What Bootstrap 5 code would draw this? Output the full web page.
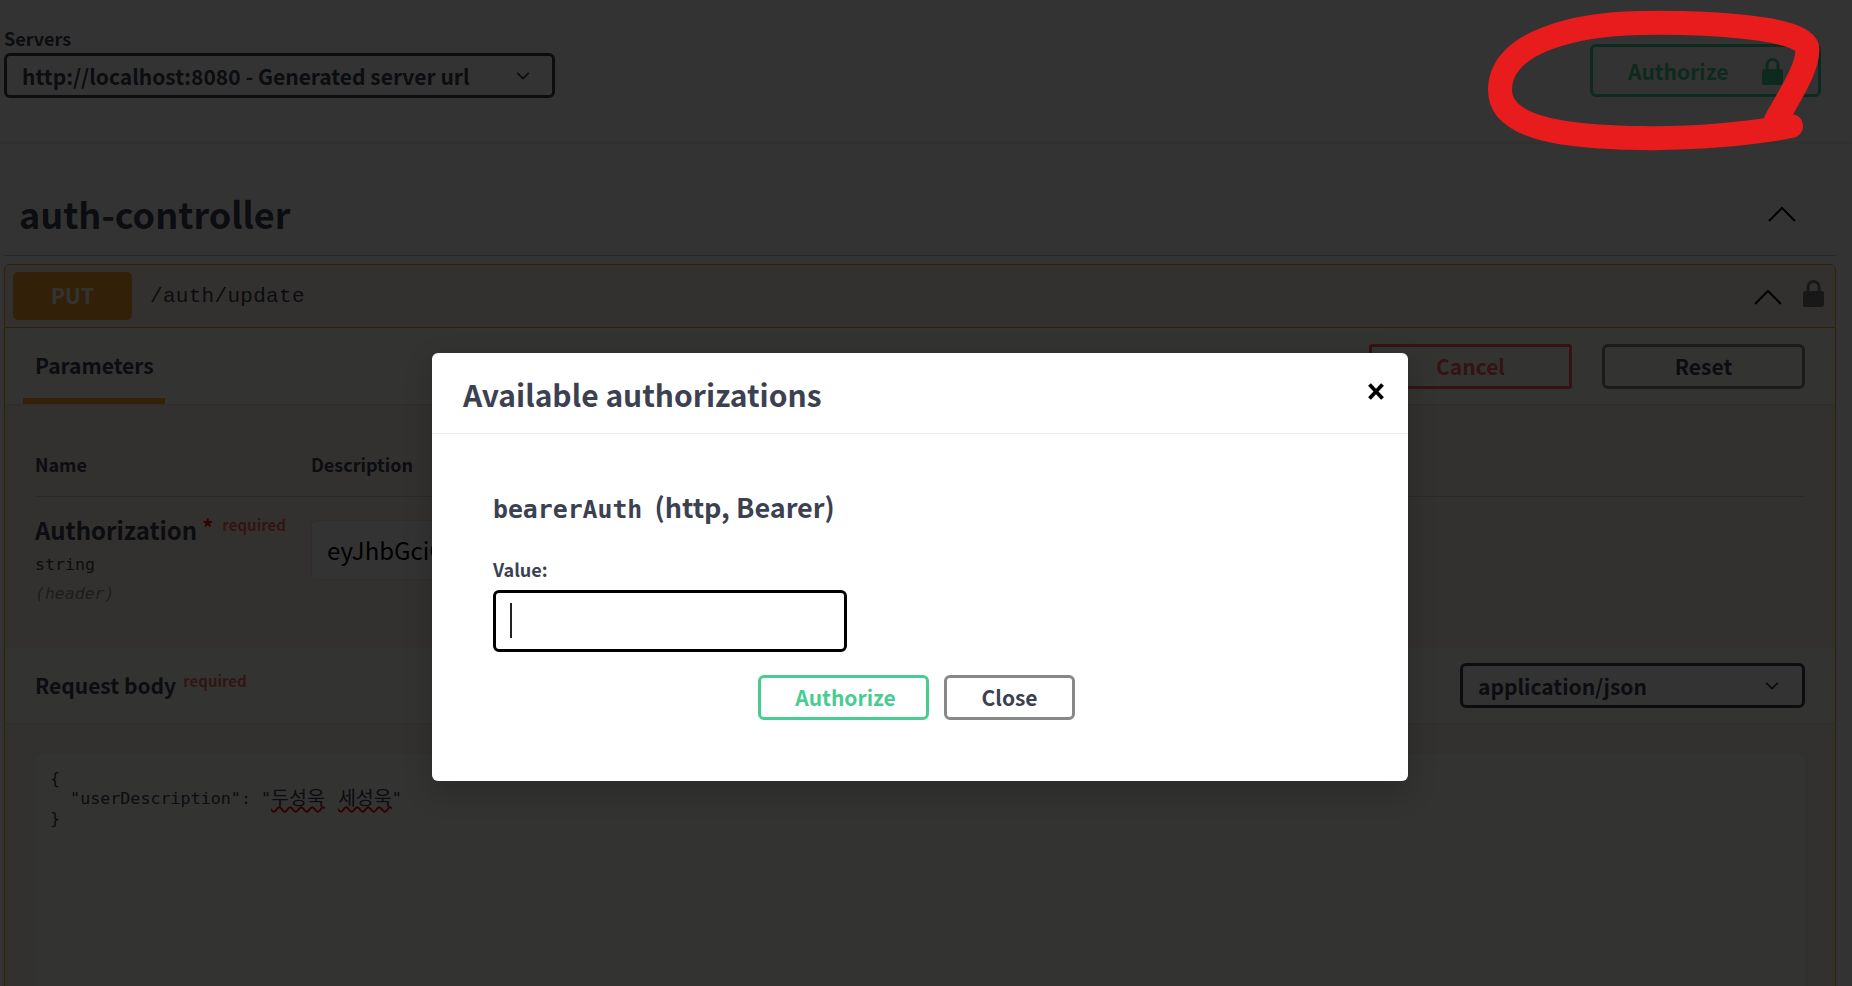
<!doctype html>
<html lang="en">
<head>
<meta charset="utf-8">
<title>Swagger UI</title>
<link rel="stylesheet" href="https://cdn.jsdelivr.net/npm/bootstrap@5.3.0/dist/css/bootstrap.min.css">
<style>
:root{--ui:"Noto Sans CJK KR","Noto Sans",sans-serif;--mono:"Liberation Mono","Noto Sans CJK KR",monospace;--ink:#3b4151}
html,body{height:986px;overflow:hidden}
body{background:#fff;font-family:var(--ui);color:var(--ink)}
.stage{position:relative;height:986px;overflow:hidden}
.scheme{height:143px;padding:24px 31px 0 4px;border-bottom:1px solid #f0f0f0;box-shadow:0 1px 2px rgba(0,0,0,.1)}
.scheme-label{font-size:18px;font-weight:600;line-height:28px;margin-bottom:1px}
.sel{width:auto;height:45px;border:3px solid #41444e;border-radius:6px;font-weight:700;font-size:21px;line-height:30px;color:var(--ink);padding:0 0 0 15px;background-position:right 24px center;background-size:18px 14px;box-shadow:none;display:flex;align-items:center;font-family:var(--ui)}
.sel-server{width:551px;background-position:right 20px center}
.sel-media{width:345px;background-position:right 21px center}
.btn-auth{width:231px;height:53px;margin-top:20px;border:3px solid #49cc90;border-radius:6px;color:#49cc90;font-weight:700;font-size:21px;padding:2px 35px 0 35px;background:transparent}
.tag-row{height:113px;margin:0 16px 0 4px;padding:30px 40px 0 15px;border-bottom:1px solid rgba(59,65,81,.3)}
.tag-title{font-size:36px;font-weight:700;margin:0;color:var(--ink);line-height:1.2}
.op{margin:8px 16px 0 4px;border:1.5px solid #fca130;border-radius:6px;background:rgba(252,161,48,.1);height:760px}
.op-head{height:63px;padding:0 11px 0 8px;border-bottom:1.5px solid #fca130}
.method{width:119px;height:48px;background:#fca130;color:#fff;font-weight:700;font-size:21px;border-radius:5px}
.path{font-family:var(--mono);font-size:21px;letter-spacing:.3px;margin-left:18px;padding-top:2px;color:var(--ink)}
.chev-op{margin-right:21px;margin-top:1px}
.lock-op{margin-top:-6px}
.tabs-row{height:76px;background:rgba(255,255,255,.8);padding:0 30px 0 18px;box-shadow:0 1px 2px rgba(0,0,0,.1)}
.tab-cur{width:142px;height:76px;padding:21px 0 0 12px;font-size:21px;font-weight:700;line-height:32px;border-bottom:6px solid #fca130;color:var(--ink)}
.action-btns{gap:30px}
.btn-line{height:45px;border:3px solid #888;border-radius:6px;font-size:21px;font-weight:700;color:var(--ink);background:transparent;padding:0;width:203px}
.btn-cancel{border-color:#ff6060;color:#ff6060;border-radius:3px}
.params{height:244px;padding:0 30px 0 30px}
.param-head{height:93px;border-bottom:1.5px solid rgba(59,65,81,.2);font-weight:700;font-size:18px;color:var(--ink);padding-top:47px;line-height:26px}
.col-name{width:276px;flex:none}
.name-main{font-size:24px;font-weight:700;line-height:32px;color:var(--ink)}
.req-star{color:red;font-size:22px;font-weight:700;position:relative;top:-4px;margin-left:5px}
.req-word{color:rgba(255,0,0,.6);font-size:15px;font-weight:700;position:relative;top:-9px;margin-left:9px}
.param-row{padding-top:17px}
.type-line{font-family:"DejaVu Sans Mono",monospace;font-size:16.6px;font-weight:400;line-height:24px;margin-top:3px}
.in-line{font-family:"DejaVu Sans Mono",monospace;font-size:16.5px;font-style:italic;color:rgba(59,65,81,.6);line-height:24px;margin-top:5px}
.val-box{width:512px;height:60px;margin-top:6px;background:#fff;border:1.5px solid #e6e6e6;border-radius:6px;padding:0 15px;font-size:24px;line-height:58px;color:#000;white-space:nowrap;overflow:hidden}
.band{height:75px;background:rgba(255,255,255,.8);padding:0 30px 0 30px;box-shadow:0 1px 2px rgba(0,0,0,.1)}
.band-title{font-size:21px;font-weight:700;color:var(--ink)}
.band-req{font-size:15px;font-weight:700;color:rgba(255,0,0,.6);position:relative;top:-7px;margin-left:7px}
.code-wrap{padding:31px 30px 0 31px}
.code-box{height:300px;background:rgba(255,255,255,.8);border-radius:6px;padding:14px;font-family:"DejaVu Sans Mono","Noto Sans CJK KR",monospace;font-size:16.7px;line-height:20px;white-space:pre;color:var(--ink)}
.squig{text-decoration:underline wavy #f00;text-underline-offset:1px;text-decoration-thickness:1.5px;font-family:"Noto Sans CJK KR",sans-serif;font-size:19.5px;line-height:0;position:relative;top:1px}
.squig + .squig{margin-left:3px}
.shade{position:absolute;inset:0;background:rgba(0,0,0,.8)}
.dialog{position:absolute;left:432px;top:353px;width:976px;height:428px;background:#fff;border:0;border-radius:6px;box-shadow:0 10px 30px rgba(0,0,0,.2)}
.dlg-head{height:81px;padding:1px 31px 0;border-bottom:1.5px solid #ebebeb}
.dlg-title{font-size:30px;font-weight:700;color:var(--ink);margin:0;line-height:1.2}
.dlg-x{background:transparent;border:0;padding:0;line-height:0;margin-top:-5px;margin-right:-7px}
.dlg-body{padding:54px 62px 0 61px}
.scheme-name{font-size:27px;font-weight:700;color:var(--ink);line-height:38px;margin:0}
.scheme-name code{font-family:"DejaVu Sans Mono",monospace;font-size:24.800px;font-weight:700;color:var(--ink);margin-right:6px}
.val-label{font-size:18px;font-weight:700;line-height:26px;margin:27px 0 8px;color:var(--ink);display:block}
.fake-input{width:354px;height:62px;border:3px solid #000;border-radius:6px;padding:10px 14px;background:#fff}
.caret-bar{display:block;width:2px;height:35px;background:#222}
.dlg-actions{margin-top:23px;padding-left:265px;gap:15px}
.btn-dlg{height:45px;border-radius:6px;font-size:21px;font-weight:700;padding:0;background:transparent;line-height:1}
.btn-ok{width:171px;border:3px solid #49cc90;color:#49cc90;padding-left:4px}
.btn-close-dlg{width:131px;border:3px solid #888;color:var(--ink)}
.scribble{position:absolute;left:0;top:0;width:1852px;height:986px;pointer-events:none}
</style>
</head>
<body>
<div class="stage">
  <div class="scheme d-flex justify-content-between">
    <div>
      <label class="scheme-label d-block">Servers</label>
      <div class="form-select sel sel-server">http://localhost:8080 - Generated server url</div>
    </div>
    <button class="btn btn-auth d-flex align-items-center justify-content-between" type="button">
      <span>Authorize</span>
      <svg width="21" height="27" viewBox="0 0 21 27"><path d="M5 13V7a5.500 5.500 0 0 1 11 0v6" fill="none" stroke="#49cc90" stroke-width="3"/><rect x="0" y="11" width="21" height="16" rx="2.500" fill="#49cc90"/></svg>
    </button>
  </div>
  <div class="tag-row d-flex justify-content-between align-items-center">
    <h3 class="tag-title">auth-controller</h3>
    <svg width="28" height="16" viewBox="0 0 28 16"><path d="M1 15 14 2l13 13" fill="none" stroke="#000" stroke-width="2"/></svg>
  </div>
  <div class="op">
    <div class="op-head d-flex align-items-center">
      <div class="method d-flex align-items-center justify-content-center">PUT</div>
      <div class="path flex-grow-1">/auth/update</div>
      <svg class="chev-op" width="28" height="16" viewBox="0 0 28 16"><path d="M1 15 14 2l13 13" fill="none" stroke="#000" stroke-width="2"/></svg>
      <svg class="lock-op" width="21" height="27" viewBox="0 0 21 27"><path d="M5 13V7a5.500 5.500 0 0 1 11 0v6" fill="none" stroke="#777" stroke-width="3"/><rect x="0" y="11" width="21" height="16" rx="2.500" fill="#777"/></svg>
    </div>
    <div class="tabs-row d-flex justify-content-between">
      <div class="tab-cur">Parameters</div>
      <div class="d-flex align-items-start pt-3 action-btns">
        <button class="btn btn-line btn-cancel" type="button">Cancel</button>
        <button class="btn btn-line" type="button">Reset</button>
      </div>
    </div>
    <div class="params">
      <div class="param-head d-flex"><div class="col-name">Name</div><div>Description</div></div>
      <div class="param-row d-flex">
        <div class="col-name">
          <div class="name-main">Authorization<span class="req-star">*</span><span class="req-word">required</span></div>
          <div class="type-line">string</div>
          <div class="in-line">(header)</div>
        </div>
        <div class="val-box">eyJhbGciO</div>
      </div>
    </div>
    <div class="band d-flex justify-content-between align-items-center">
      <div><span class="band-title">Request body</span><span class="band-req">required</span></div>
      <div class="form-select sel sel-media">application/json</div>
    </div>
    <div class="code-wrap">
      <div class="code-box">{
  "userDescription": "<span class="squig">두성욱</span> <span class="squig">세성욱</span>"
}</div>
    </div>
  </div>

  <div class="shade"></div>

  <div class="modal-content dialog">
    <div class="dlg-head d-flex justify-content-between align-items-center">
      <h3 class="dlg-title">Available authorizations</h3>
      <button class="dlg-x" type="button" aria-label="Close">
        <svg width="16" height="17" viewBox="0 0 16 17"><path d="M1.500 1.500 14.500 15.500M14.500 1.500 1.500 15.500" fill="none" stroke="#000" stroke-width="3.800"/></svg>
      </button>
    </div>
    <div class="dlg-body">
      <h4 class="scheme-name"><code>bearerAuth</code> (http, Bearer)</h4>
      <label class="val-label">Value:</label>
      <div class="fake-input"><span class="caret-bar"></span></div>
      <div class="d-flex dlg-actions">
        <button class="btn btn-dlg btn-ok" type="button">Authorize</button>
        <button class="btn btn-dlg btn-close-dlg" type="button">Close</button>
      </div>
    </div>
  </div>

  <svg class="scribble" viewBox="0 0 1852 986">
    <path d="M1791 126C1750 134 1690 139 1640 138 1570 137 1500 130 1500 90 1500 40 1580 24 1640 23 1700 22 1800 26 1807 47 1810 65 1790 95 1776 120" fill="none" stroke="#e81c1c" stroke-width="24" stroke-linecap="round" stroke-linejoin="round"/>
  </svg>
</div>
<script src="https://cdn.jsdelivr.net/npm/bootstrap@5.3.0/dist/js/bootstrap.bundle.min.js"></script>
</body>
</html>
